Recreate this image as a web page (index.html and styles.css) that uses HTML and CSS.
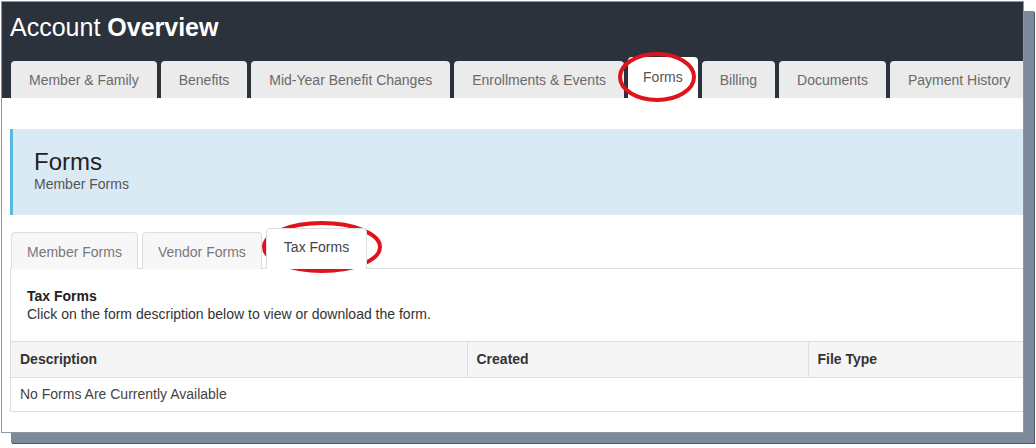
FILE: index.html
```html
<!DOCTYPE html>
<html lang="en">
<head>
    <meta charset="UTF-8">
    <title>Account Overview - Forms</title>
    <link rel="stylesheet" href="styles.css">
</head>
<body>
    <div class="shot">
        <header class="top">
            <h1 class="title">Account <b>Overview</b></h1>
            <nav class="main-tabs">
                <a class="tab">Member &amp; Family</a>
                <a class="tab">Benefits</a>
                <a class="tab">Mid-Year Benefit Changes</a>
                <a class="tab">Enrollments &amp; Events</a>
                <a class="tab active">Forms</a>
                <a class="tab">Billing</a>
                <a class="tab">Documents</a>
                <a class="tab">Payment History</a>
            </nav>
        </header>

        <main class="content">
            <section class="banner">
                <h2>Forms</h2>
                <p>Member Forms</p>
            </section>

            <nav class="sub-tabs">
                <a class="sub-tab">Member Forms</a>
                <a class="sub-tab">Vendor Forms</a>
                <a class="sub-tab active">Tax Forms</a>
            </nav>

            <div class="tab-box">
                <div class="intro">
                    <strong>Tax Forms</strong>
                    <p>Click on the form description below to view or download the form.</p>
                </div>
                <table class="forms-table">
                    <colgroup>
                        <col class="col-desc">
                        <col class="col-created">
                        <col>
                    </colgroup>
                    <thead>
                        <tr>
                            <th>Description</th>
                            <th>Created</th>
                            <th>File Type</th>
                        </tr>
                    </thead>
                    <tbody>
                        <tr>
                            <td colspan="3">No Forms Are Currently Available</td>
                        </tr>
                    </tbody>
                </table>
            </div>
        </main>
    </div>

    <!-- red hand-drawn markers over the screenshot -->
    <svg class="marks" width="1036" height="448" viewBox="0 0 1036 448">
        <ellipse cx="657" cy="77" rx="37" ry="23" />
        <ellipse cx="322" cy="247" rx="58" ry="24" />
    </svg>
</body>
</html>
```

FILE: styles.css
```css
body {
    margin: 0;
    background: #fff;
    font-family: "Liberation Sans", Arial, sans-serif;
    width: 1036px;
    height: 448px;
    overflow: hidden;
    position: relative;
}
.shot {
    margin: 1px 0 0 1px;
    width: 1021px;
    height: 430px;
    border: 1px solid #8d97a3;
    background: #fff;
    overflow: hidden;
    box-shadow: 10px 10px 0 #7e8a99, 11px 11px 0 #4e5664;
}

/* dark header with the main tabs */
.top {
    background: #2c323b;
    height: 96px;
}
.title {
    margin: 0;
    padding: 11px 0 0 8px;
    font-size: 25px;
    line-height: 28px;
    font-weight: normal;
    color: #fff;
}
.main-tabs {
    display: flex;
    align-items: flex-end;
    gap: 4px;
    margin-top: 16px;
    padding-left: 9px;
}
.tab {
    display: block;
    height: 37px;
    line-height: 38px;
    padding: 0 18px;
    background: #ebebeb;
    color: #6a6a6a;
    font-size: 14px;
    border-radius: 4px 4px 0 0;
    white-space: nowrap;
}
.tab.active {
    height: 41px;
    line-height: 41px;
    padding: 0 15px;
    background: #fff;
    color: #555;
}

/* page body */
.content {
    width: 1040px;
    padding: 31px 0 0 8px;
}
.banner {
    background: #d9eaf5;
    border-left: 3px solid #5ab8dd;
    padding: 20px 0 22px 21px;
}
.banner h2 {
    margin: 0;
    font-size: 24px;
    line-height: 26px;
    font-weight: normal;
    color: #222;
}
.banner p {
    margin: 0;
    font-size: 14px;
    line-height: 18px;
    color: #555;
}

.sub-tabs {
    display: flex;
    align-items: flex-end;
    gap: 4px;
    margin-top: 13px;
    padding-left: 1px;
    position: relative;
    z-index: 1;
    margin-bottom: -1px;
}
.sub-tab {
    display: block;
    height: 36px;
    line-height: 38px;
    padding: 0 15px;
    background: #f7f7f7;
    border: 1px solid #dedede;
    border-bottom: none;
    border-radius: 4px 4px 0 0;
    color: #777;
    font-size: 14px;
    white-space: nowrap;
}
.sub-tab.active {
    height: 40px;
    line-height: 37px;
    padding: 0 17px;
    background: #fff;
    color: #444;
}

.tab-box {
    border: 1px solid #dedede;
}
.intro {
    padding: 18px 0 18px 16px;
    font-size: 14px;
    line-height: 18px;
    color: #333;
}
.intro strong {
    display: block;
    color: #222;
}
.intro p {
    margin: 0;
}

.forms-table {
    width: 100%;
    border-collapse: collapse;
    font-size: 14px;
    line-height: 17px;
}
.col-desc { width: 456px; }
.col-created { width: 341px; }
.forms-table th {
    text-align: left;
    background: #f5f5f5;
    color: #333;
    padding: 9px 9px;
    border-top: 1px solid #dedede;
    border-right: 1px solid #dedede;
}
.forms-table td {
    padding: 8px 9px;
    color: #444;
    border-top: 1px solid #dedede;
}

.marks {
    position: absolute;
    top: 0;
    left: 0;
    pointer-events: none;
}
.marks ellipse {
    fill: none;
    stroke: #e0121b;
    stroke-width: 4;
}
```
